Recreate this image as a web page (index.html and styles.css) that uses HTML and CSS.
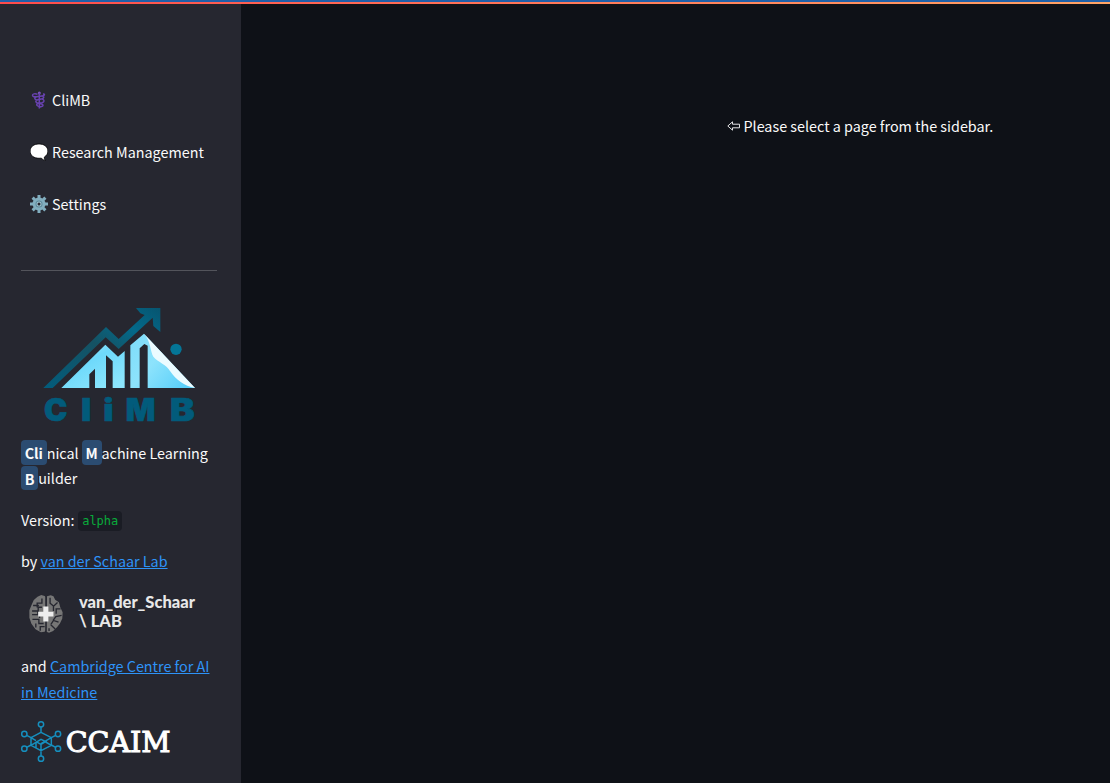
FILE: index.html
```
<!DOCTYPE html>
<html lang="en">
<head>
<meta charset="utf-8">
<title>CliMB</title>
<link rel="stylesheet" href="styles.css">
</head>
<body>
<div class="topbar"></div>
<div class="app">
  <aside class="sidebar">
    <nav class="nav">
      <a class="nav-item">
        <svg class="nav-icon" viewBox="0 0 18 18" fill="none" stroke="#6842b0"><circle cx="9.300" cy="1.900" r="1.500" fill="#7a54bb" stroke="none"/><path d="M9.300 2v15.500" stroke-width="1.500"/><path d="M7.500 3.300C5 2.300 2.500 2.800 2.500 4.300S4.500 6 6.500 5.700L12 5c3-.3 3.200-2.200 1-2M6.500 5.700C3.500 7 5 8.800 7 9l5-1.200c2-.6 2.500-2.200.5-2.600M7 9c-2.500 1.500-.5 3.200 1.500 3.300l3 .6c2 .4 2 2.200.2 2.600l-2.500.6" stroke-width="1.500"/><path d="M12 7.900c3 1.300 2.500 3.200 0 3.800l-3.500.6c-2.200.6-2.500 2.200-.5 2.800l2.500.6" stroke-width="1.400"/></svg>
        <span>CliMB</span>
      </a>
      <a class="nav-item">
        <svg class="nav-icon" viewBox="0 0 18 18"><path d="M9 .9C3.700.9.1 3.800.1 8.100S3.700 15.300 9 15.300l2.400-.1c1 1.300 2.300 2 4 2.300-1-1.100-1.200-2.300-1-3.500 2.200-1.300 3.500-3.200 3.500-5.900C17.900 3.800 14.300.9 9 .9Z" fill="#fff" stroke="#08080a" stroke-width=".9"/></svg>
        <span>Research Management</span>
      </a>
      <a class="nav-item">
        <svg class="nav-icon" viewBox="0 0 18 18"><g stroke="#82aebf" stroke-width="3"><path d="M9 0v18M0 9h18M2.600 2.600l12.800 12.800M15.400 2.600L2.600 15.400"/></g><circle cx="9" cy="9" r="6.500" fill="#82aebf"/><circle cx="9" cy="9" r="3.500" fill="#5c8798"/><circle cx="9" cy="9" r="2.500" fill="#a0c5d2"/><circle cx="9" cy="9" r="1.500" fill="#262730"/></svg>
        <span>Settings</span>
      </a>
    </nav>
    <hr class="rule">
    <svg class="climb-logo" viewBox="0 0 540 405">
      <defs>
        <linearGradient id="arrow" x1="0" y1="1" x2="1" y2="0"><stop offset="0" stop-color="#025c7c"/><stop offset=".5" stop-color="#155263"/><stop offset=".75" stop-color="#03698a"/><stop offset="1" stop-color="#075570"/></linearGradient>
        <linearGradient id="ice" x1="0" y1="0" x2=".8" y2="1"><stop offset="0" stop-color="#a6e8fa"/><stop offset=".45" stop-color="#6ed9fb"/><stop offset="1" stop-color="#8de6fd"/></linearGradient>
        <linearGradient id="peak" gradientUnits="userSpaceOnUse" x1="300" y1="130" x2="470" y2="270"><stop offset="0" stop-color="#7eddfa"/><stop offset=".45" stop-color="#8de3fc"/><stop offset="1" stop-color="#59cffa"/></linearGradient>
      </defs>
      <path fill="url(#arrow)" d="M40 279 228 96l38 36 78-72-13-5-13-16 73 0v72l-21-18-2-25-102 94-39-35L68 279Z"/>
      <path fill="url(#ice)" d="M94 279 226 149l38 36 20-17v111h-36v-80l-20-18v98h-33v-58l-17 17v41Z"/>
      <path fill="url(#peak)" d="M301 279V151l41-35 153 163H353V152l-10-5-14 13v119Z"/>
      <path fill="#ecfbff" d="M342 116 495 279c-33-7-56-23-75-51-9-18-36-27-50-43-10-17-7-46-28-69Z"/>
      <circle cx="438" cy="163" r="17" fill="#047596"/>
      <g class="climb-word"><text x="42" y="378" textLength="70" lengthAdjust="spacingAndGlyphs">C</text><text x="153" y="378" textLength="31" lengthAdjust="spacingAndGlyphs">l</text><text x="220" y="378" textLength="31" lengthAdjust="spacingAndGlyphs">i</text><text x="287" y="378" textLength="89" lengthAdjust="spacingAndGlyphs">M</text><text x="420" y="378" textLength="74" lengthAdjust="spacingAndGlyphs">B</text></g>
    </svg>
    <p class="para tagline"><b class="mark">Cli</b>nical <b class="mark">M</b>achine Learning <b class="mark">B</b>uilder</p>
    <p class="para">Version: <code class="code">alpha</code></p>
    <p class="para">by <a class="link">van der Schaar Lab</a></p>
    <div class="lab">
      <svg class="brain" viewBox="0 0 100 112">
        <path fill="#767676" d="M46 3 36 0 25 5 14 15 7 30 1 45l0 22 6 18 12 16 16 9 11-2 3-4V6ZM53 4l11-3 8 3 5 10 11 7 4 15 7 15-1 18-7 15-8 10-12 12-12 5-8-3Z"/>
        <path class="folds" d="M50 0v112M38 10v14H24v13M12 31h17M38 36H27v11H9M9 58h17V47M10 72h19v12h14M31 68v-9M20 84v12M33 105V93h13M62 8v16l9 8M84 22 72 33v14M93 41H80v14M96 60 79 64l-8 11M87 80l-15-5-8 12M77 100 64 88M59 106V98"/>
        <path fill="#ededed" d="M42 34h15v15h15v14H57v15H42V63H27V49h15Z"/>
      </svg>
      <div class="lab-name">van_der_Schaar<br>\ LAB</div>
    </div>
    <p class="para cambridge">and <a class="link">Cambridge Centre for AI in Medicine</a></p>
    <svg class="ccaim" viewBox="0 0 450 123">
      <g fill="none" stroke="#168fbe" stroke-width="4.500">
        <circle cx="60" cy="10" r="8"/><circle cx="60" cy="113" r="8"/><circle cx="10" cy="39" r="8"/><circle cx="111" cy="39" r="8"/><circle cx="10" cy="83" r="8"/><circle cx="111" cy="83" r="8"/>
        <path d="M60 18v17M60 88v17M17 43l13 7M104 43l-13 7M17 79l13-7M104 79l-13-7M60 34l31 16v23L60 89 30 73V50ZM30 73l30-18 14 7-14 8-15-8M30 50l15 9M91 50 60 68M91 73 74 63M45 62v18M60 70v18"/>
      </g>
      <text class="ccaim-word" x="134" y="92" textLength="315" lengthAdjust="spacingAndGlyphs">CCAIM</text>
    </svg>
  </aside>
  <main class="main">
    <p class="message"><svg class="left-arrow" viewBox="0 0 13 10"><path d="M5.500.8v2.400h7v3.600h-7v2.400L.8 5Z" fill="none" stroke="#e3e3e5"/></svg><span>Please select a page from the sidebar.</span></p>
  </main>
</div>
</body>
</html>
```
FILE: styles.css
```
* { box-sizing: border-box; }
body {
  margin: 0;
  background: #0e1117;
  color: #fafafa;
  font-family: "Noto Sans CJK SC", "Noto Sans", sans-serif;
  font-size: 14.350px;
  line-height: 25.6px;
}
.topbar {
  height: 4px;
  border-top: 2px solid #1f5fa8;
  background: linear-gradient(90deg, #ff4b4b, #fffd80) 0 0 / 200% 100%;
}
.app { display: flex; height: 779px; }
.sidebar {
  display: flex;
  flex-direction: column;
  flex: none;
  width: 241px;
  padding: 83px 21px 0;
  background: #262730;
  overflow: hidden;
}
.nav { display: flex; flex-direction: column; gap: 26px; padding-left: 9px; }
.nav-item { display: flex; align-items: center; gap: 4px; height: 26px; white-space: nowrap; }
.nav-icon { width: 18px; height: 18px; flex: none; }
.rule { width: 196px; height: 1px; margin: 53px 0 0; border: 0; background: #53545b; flex: none; }
.climb-logo { width: 180px; height: 135px; margin: 24px 0 0 9px; flex: none; }
.climb-word {
  fill: #025b7b;
  stroke: #025b7b;
  stroke-width: 2px;
  font: 900 92px Inter, "Liberation Sans", sans-serif;
}
.para { margin: 0 0 15.6px; }
.tagline { margin-top: 9.500px; margin-bottom: 16.600px; width: 196px; }
.mark { padding: 1.500px 3.700px 2px; border-radius: 4px; background: #2b4c71; line-height: 20px; }
.code {
  position: relative;
  top: -1px;
  padding: 3px 4px;
  margin-left: .4px;
  border-radius: 4px;
  background: #1a1c24;
  color: #09ab3b;
  font: 12px "DejaVu Sans Mono", monospace;
}
.link { color: #2e93f7; text-decoration: underline; }
.lab { display: flex; height: 42px; margin: 1px 0 20px 8px; gap: 16px; flex: none; }
.brain { width: 34px; height: 38px; margin-top: 4px; }
.folds { fill: none; stroke: #262730; stroke-width: 4px; }
.lab-name { color: #e8e8e8; font: 900 16.500px/19px Lato, sans-serif; padding-top: 2px; white-space: nowrap; }
.cambridge { width: 196px; line-height: 26px; margin-bottom: 16.500px; }
.ccaim { width: 150px; height: 41px; flex: none; overflow: visible; }
.ccaim-word { fill: #fff; stroke: #fff; stroke-width: 3px; font: 82px "DejaVu Serif", serif; }
.main { flex: 1; padding: 109px 0 0 486px; }
.message { display: flex; align-items: center; gap: 3.500px; margin: 0; white-space: nowrap; }
.left-arrow { width: 13px; height: 10px; }
```
